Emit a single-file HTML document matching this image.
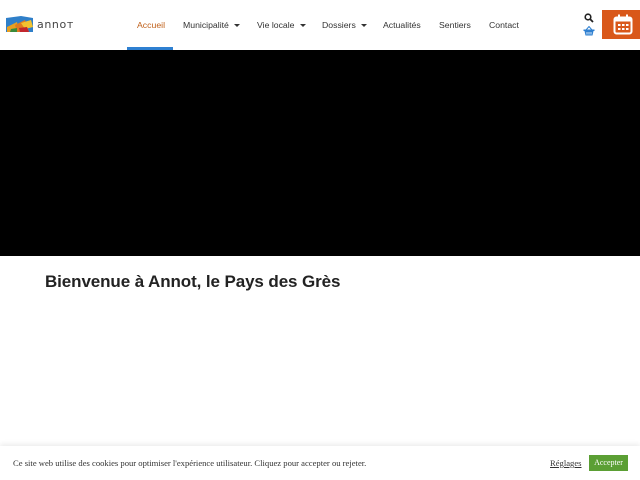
<!DOCTYPE html>
<html><head><meta charset="utf-8"><style>
*{margin:0;padding:0;box-sizing:border-box}
body{width:640px;height:480px;overflow:hidden;background:#fff;font-family:"Liberation Sans",sans-serif;position:relative}
.hdr{position:absolute;top:0;left:0;width:640px;height:50px;background:#fff}
.nav a{position:absolute;top:20px;font-size:8.7px;color:#333;text-decoration:none;white-space:nowrap}
.nav a.act{color:#c0601a}
.car{display:inline-block;width:0;height:0;border-left:3px solid transparent;border-right:3px solid transparent;border-top:3.5px solid #333;margin-left:5px;vertical-align:1px}
.ul{position:absolute;left:127px;top:47px;width:46px;height:3px;background:#2f80d1}
.hero{position:absolute;top:50px;left:0;width:640px;height:206px;background:#000}
h1{position:absolute;left:45px;top:272px;font-size:17px;font-weight:bold;color:#222;letter-spacing:-0.1px}
.ck{position:absolute;left:0;top:446px;width:640px;height:34px;background:#fff;box-shadow:0 -2px 5px rgba(0,0,0,0.08)}
.ck p{position:absolute;left:13px;top:12px;font-family:"Liberation Serif",serif;font-size:8.6px;color:#333}
.ck .r{position:absolute;left:550px;top:12px;font-family:"Liberation Serif",serif;font-size:8.6px;color:#333;text-decoration:underline}
.ck .b{position:absolute;left:589px;top:9px;width:39px;height:16px;background:#5b9f34;color:#fff;font-family:"Liberation Serif",serif;font-size:8px;text-align:center;line-height:16px}
</style></head><body>
<div class="hdr">
 <svg style="position:absolute;left:5px;top:15px" width="30" height="19" viewBox="0 0 30 19">
  <path d="M1 3 L16 1 L28 3 L28 17 L1 17Z" fill="#2f7fc9"/>
  <path d="M2 12 L12 7 L14 17 L2 17Z" fill="#e8a020"/>
  <path d="M10 10 L20 5 L24 17 L12 17Z" fill="#e07a20"/>
  <path d="M16 8 L26 5 L28 12 L20 14Z" fill="#f2c230"/>
  <path d="M14 13 L22 12 L24 17 L15 17Z" fill="#c2272d"/>
  <path d="M6 14 L12 13 L12 17 L5 17Z" fill="#3a8a3a"/>
 </svg>
 <div style="position:absolute;left:37px;top:18px;font-size:11px;color:#444;letter-spacing:0.6px;font-family:'DejaVu Sans',sans-serif">annoт</div>
 <div class="nav">
  <a class="act" style="left:137px">Accueil</a>
  <a style="left:183px">Municipalité<span class="car"></span></a>
  <a style="left:257px">Vie locale<span class="car"></span></a>
  <a style="left:322px">Dossiers<span class="car"></span></a>
  <a style="left:383px">Actualités</a>
  <a style="left:439px">Sentiers</a>
  <a style="left:489px">Contact</a>
 </div>
 <div class="ul"></div>
 <svg style="position:absolute;left:584px;top:13px" width="10" height="10" viewBox="0 0 10 10"><circle cx="4" cy="4" r="2.8" fill="none" stroke="#222" stroke-width="1.6"/><path d="M6 6 L9 9" stroke="#222" stroke-width="1.8"/></svg>
 <svg style="position:absolute;left:583px;top:26px" width="12" height="10" viewBox="0 0 12 10"><path d="M3 4 L6 0.5 L9 4" fill="none" stroke="#2f80d1" stroke-width="1"/><path d="M0.5 3.5 H11.5 V5 H0.5Z M1.5 5 L2.5 9.5 H9.5 L10.5 5Z" fill="#2f80d1"/><path d="M4 6 V8.5 M6 6 V8.5 M8 6 V8.5" stroke="#fff" stroke-width="0.8"/></svg>
 <div style="position:absolute;left:602px;top:10px;width:38px;height:29px;background:#d9581a"></div>
 <svg style="position:absolute;left:613px;top:14px" width="20" height="21" viewBox="0 0 20 21"><rect x="1.5" y="3.5" width="17" height="16" rx="2" fill="none" stroke="#fff" stroke-width="2"/><rect x="1.5" y="3.5" width="17" height="4" fill="#fff"/><rect x="5" y="0.5" width="2" height="4" fill="#fff"/><rect x="13" y="0.5" width="2" height="4" fill="#fff"/><g fill="#fff"><rect x="5" y="10" width="2.5" height="2"/><rect x="9" y="10" width="2.5" height="2"/><rect x="13" y="10" width="2.5" height="2"/><rect x="5" y="14" width="2.5" height="2"/><rect x="9" y="14" width="2.5" height="2"/><rect x="13" y="14" width="2.5" height="2"/></g></svg>
</div>
<div class="hero"></div>
<h1>Bienvenue à Annot, le Pays des Grès</h1>
<div class="ck">
 <p>Ce site web utilise des cookies pour optimiser l'expérience utilisateur. Cliquez pour accepter ou rejeter.</p>
 <span class="r">Réglages</span>
 <div class="b">Accepter</div>
</div>
</body></html>
